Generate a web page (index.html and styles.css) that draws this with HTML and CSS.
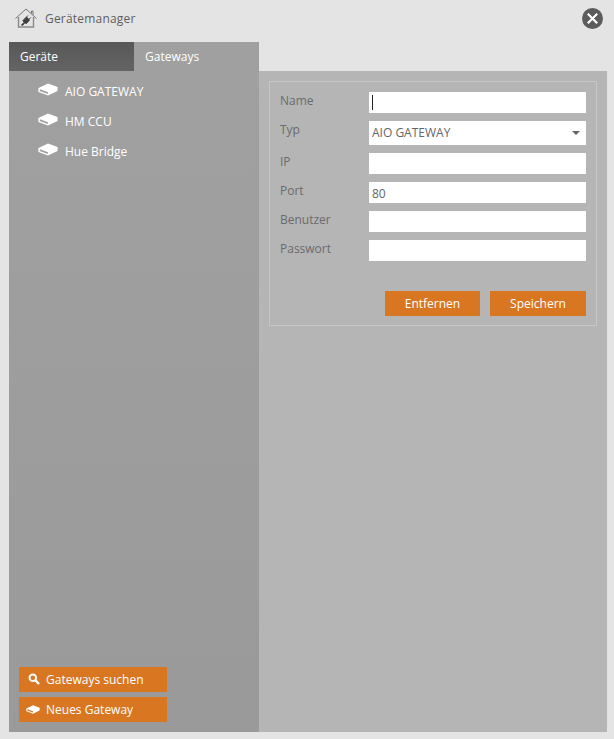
FILE: index.html
```html
<!DOCTYPE html>
<html lang="de">
<head>
  <meta charset="UTF-8" />
  <meta name="viewport" content="width=device-width, initial-scale=1.0" />
  <title>Gerätemanager</title>
  <link rel="stylesheet" href="styles.css">
</head>
<body>

  <svg width="0" height="0" class="defs">
    <symbol id="gateway" viewBox="0 0 20 13">
      <path d="M10 0.5 L19.5 4 Q20 5 19.5 6.5 L19.5 8 L10 12.5 L0.5 9 Q0 7.5 0.5 5 Z M2 6.2 L1.6 7.9 L9.8 11 L10 9.2 Z" fill="#fff" fill-rule="evenodd"/>
    </symbol>
  </svg>

  <header class="titlebar">
    <div class="title">
      <svg class="title-icon" width="22" height="20" viewBox="0 0 22 20">
        <path d="M0.5 10.5 L11 1 L21.5 10.5 M16.5 5.5 V3 H18 V7" fill="none" stroke="#777" stroke-width="1"/>
        <path d="M3.5 9 V19 H18.5 V9" fill="none" stroke="#8a8a8a" stroke-width="1.4"/>
        <path d="M6.5 17 L9 14.5 L8 12.5 L11.5 9 L14.5 12 L11.5 15.5 L9.8 14.8 L7.5 17.5 Z M11 9.5 L13 7.5 M13.8 11.5 L15.8 9.5" fill="#3f3f3f" stroke="#3f3f3f" stroke-width="1"/>
      </svg>
      <span>Gerätemanager</span>
    </div>
    <svg class="close" width="21" height="21" viewBox="0 0 21 21">
      <circle cx="10.5" cy="10.5" r="10.5" fill="#5c5c5c"/>
      <path d="M5.8 5.8 L15.2 15.2 M15.2 5.8 L5.8 15.2" stroke="#fff" stroke-width="2.2"/>
    </svg>
  </header>

  <div class="tabs">
    <div class="tab tab-dark">Geräte</div>
    <div class="tab tab-active">Gateways</div>
  </div>

  <main class="content">
    <aside class="sidebar">
      <ul class="gateway-list">
        <li><svg class="gw-icon"><use href="#gateway"/></svg>AIO GATEWAY</li>
        <li><svg class="gw-icon"><use href="#gateway"/></svg>HM CCU</li>
        <li><svg class="gw-icon"><use href="#gateway"/></svg>Hue Bridge</li>
      </ul>
      <div class="side-buttons">
        <div class="btn btn-side">
          <svg class="btn-icon" width="12" height="12" viewBox="0 0 12 12">
            <circle cx="4.8" cy="4.8" r="3.3" fill="none" stroke="#fff" stroke-width="1.9"/>
            <path d="M7.2 7.2 L11 11" stroke="#fff" stroke-width="2.4"/>
          </svg>
          Gateways suchen
        </div>
        <div class="btn btn-side">
          <svg class="btn-icon btn-icon-gw"><use href="#gateway"/></svg>
          Neues Gateway
        </div>
      </div>
    </aside>

    <section class="detail">
      <form class="box">
        <div class="row">
          <label>Name</label>
          <div class="field"><span class="caret"></span></div>
        </div>
        <div class="row">
          <label>Typ</label>
          <div class="field field-select">AIO GATEWAY<span class="arrow"></span></div>
        </div>
        <div class="row">
          <label>IP</label>
          <div class="field"></div>
        </div>
        <div class="row">
          <label>Port</label>
          <div class="field">80</div>
        </div>
        <div class="row">
          <label>Benutzer</label>
          <div class="field"></div>
        </div>
        <div class="row">
          <label>Passwort</label>
          <div class="field"></div>
        </div>
        <div class="actions">
          <div class="btn btn-remove">Entfernen</div>
          <div class="btn btn-save">Speichern</div>
        </div>
      </form>
    </section>
  </main>

</body>
</html>
```

FILE: styles.css
```css
body {
  font-family: "Open Sans", Arial, sans-serif;
  font-size: 12px;
  background-color: #e4e4e4;
  margin: 0;
  height: 739px;
  padding: 0 7px 7px 9px;
  box-sizing: border-box;
  display: flex;
  flex-direction: column;
  overflow: hidden;
}

.defs {
  position: absolute;
}

.titlebar {
  height: 42px;
  flex: none;
  display: flex;
  justify-content: space-between;
  align-items: flex-start;
}

.title {
  display: flex;
  align-items: center;
  padding: 8px 0 0 6px;
  color: #5e5e5e;
  font-size: 12px;
  letter-spacing: 0.2px;
}

.title-icon {
  margin-right: 8px;
}

.close {
  margin: 8px 4px 0 0;
}

.tabs {
  display: flex;
  flex: none;
  height: 29px;
}

.tab {
  width: 125px;
  height: 29px;
  line-height: 29px;
  padding-left: 11px;
  box-sizing: border-box;
  color: #fff;
}

.tab-dark {
  background: linear-gradient(#585858, #646464);
}

.tab-active {
  background-color: #a0a0a0;
}

.content {
  flex: 1;
  display: flex;
  min-height: 0;
}

.sidebar {
  width: 250px;
  background: linear-gradient(#a0a0a0, #9a9a9a);
  display: flex;
  flex-direction: column;
  justify-content: space-between;
  padding: 10px;
  box-sizing: border-box;
}

.gateway-list {
  list-style: none;
  margin: 0;
  padding: 0 0 0 19px;
}

.gateway-list li {
  height: 20px;
  margin-bottom: 10px;
  display: flex;
  align-items: center;
  color: #fff;
}

.gw-icon {
  width: 20px;
  height: 13px;
  margin: -3px 7px 0 0;
}

.side-buttons {
  display: flex;
  flex-direction: column;
  gap: 5px;
}

.btn {
  background-color: #d97622;
  color: #fff;
  height: 25px;
  line-height: 25px;
}

.btn-side {
  width: 148px;
  display: flex;
  align-items: center;
  padding-left: 27px;
  box-sizing: border-box;
  position: relative;
}

.btn-icon {
  position: absolute;
  left: 9px;
  top: 6px;
}

.btn-icon-gw {
  left: 7px;
  top: 8px;
  width: 14px;
  height: 9px;
}

.detail {
  flex: 1;
  background-color: #b5b5b5;
  padding: 10px;
}

.box {
  height: 245px;
  box-sizing: border-box;
  border: 1px solid #c6c6c6;
  padding: 10px 10px 9px 10px;
  display: flex;
  flex-direction: column;
  gap: 8px;
}

.row {
  display: flex;
  justify-content: space-between;
}

.row label {
  color: #6b6b6b;
  line-height: 18px;
}

.field {
  width: 217px;
  height: 21px;
  line-height: 23px;
  background-color: #fff;
  padding-left: 3px;
  box-sizing: border-box;
  color: #666;
  position: relative;
}

.field-select {
  height: 24px;
  line-height: 24px;
}

.caret {
  display: block;
  width: 1px;
  height: 15px;
  margin-top: 3px;
  background-color: #222;
}

.arrow {
  position: absolute;
  right: 6px;
  top: 10px;
  border-left: 4px solid transparent;
  border-right: 4px solid transparent;
  border-top: 4px solid #666;
}

.actions {
  margin-top: auto;
  display: flex;
  justify-content: flex-end;
  gap: 10px;
}

.actions .btn {
  text-align: center;
}

.btn-remove {
  width: 95px;
}

.btn-save {
  width: 96px;
}
```
